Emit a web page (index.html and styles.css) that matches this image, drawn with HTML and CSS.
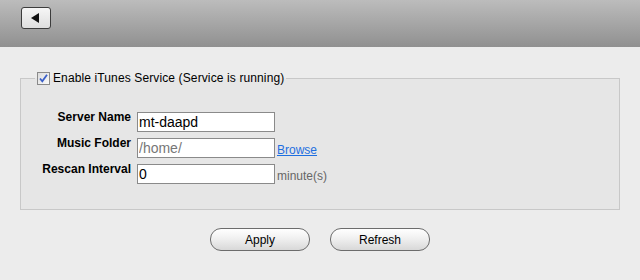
FILE: index.html
```html
<!DOCTYPE html>
<html lang="en">
<head>
  <meta charset="UTF-8">
  <title>iTunes Service</title>
  <link rel="stylesheet" href="styles.css">
</head>
<body>
  <div class="topbar">
    <button class="back-btn" type="button" aria-label="Back">
      <svg width="9" height="10" viewBox="0 0 9 10"><polygon points="0,5 8,0 8,10" fill="#111"/></svg>
    </button>
  </div>

  <div class="content">
    <fieldset class="service">
      <legend>
        <label class="enable">
          <span class="check">
            <svg width="11" height="11" viewBox="0 0 11 11"><path d="M2 5.5 L4.3 8.3 L9 1.8" fill="none" stroke="#3a5fc8" stroke-width="1.8"/></svg>
          </span>
          Enable iTunes Service (Service is running)
        </label>
      </legend>

      <div class="form-grid">
        <label class="field-label" for="serverName">Server Name</label>
        <div class="field"><input type="text" id="serverName" class="text-input" value="mt-daapd"></div>

        <label class="field-label" for="musicFolder">Music Folder</label>
        <div class="field"><input type="text" id="musicFolder" class="text-input muted" value="/home/"><a href="#" class="browse">Browse</a></div>

        <label class="field-label" for="rescan">Rescan Interval</label>
        <div class="field"><input type="text" id="rescan" class="text-input" value="0"><span class="unit">minute(s)</span></div>
      </div>
    </fieldset>

    <div class="actions">
      <button type="button" class="pill">Apply</button>
      <button type="button" class="pill">Refresh</button>
    </div>
  </div>
</body>
</html>
```

FILE: styles.css
```css
body {
  margin: 0;
  background-color: #ececec;
  font-family: 'Liberation Sans', Arial, sans-serif;
  font-size: 12px;
  color: #000;
}
.topbar {
  height: 47px;
  background: linear-gradient(to bottom, #bcbcbc, #909090);
  padding: 7px 0 0 21px;
  box-sizing: border-box;
}
.back-btn {
  width: 30px;
  height: 22px;
  padding: 0;
  border: 1px solid #3c3c3c;
  border-radius: 3px;
  background: linear-gradient(to bottom, #f6f6f6, #dedede);
  display: flex;
  align-items: center;
  justify-content: center;
}
.back-btn svg {
  display: block;
  margin-left: -2px;
}
.content {
  padding-top: 24px;
}
.service {
  margin: 0 20px;
  padding: 0 0 25px 0;
  border: 1px solid #c8c8c8;
  background-color: #e6e6e6;
  min-width: 0;
}
.service legend {
  margin-left: 14px;
  padding: 0 2px 0 2px;
  line-height: 15px;
  letter-spacing: 0.12px;
}
.enable {
  display: flex;
  align-items: center;
  gap: 3px;
}
.check {
  width: 11px;
  height: 11px;
  border: 1px solid #8a8a8a;
  background: linear-gradient(to bottom right, #dcdcdc, #fafafa);
  display: inline-flex;
  align-items: center;
  justify-content: center;
}
.check svg {
  display: block;
}
.form-grid {
  display: grid;
  grid-template-columns: 110px auto;
  column-gap: 6px;
  row-gap: 4px;
  margin-top: 24px;
}
.field-label {
  font-weight: bold;
  text-align: right;
  line-height: 14px;
  align-self: start;
}
.field {
  display: flex;
  align-items: center;
  gap: 2px;
  padding-top: 2px;
}
.text-input {
  width: 138px;
  height: 20px;
  box-sizing: border-box;
  border: 1px solid #8a8a8a;
  padding: 0 1px;
  margin: 0;
  font-family: 'Liberation Sans', Arial, sans-serif;
  font-size: 14px;
  color: #000;
  background-color: #fff;
  outline: none;
}
.text-input.muted {
  color: #777;
}
.browse {
  color: #1e6fe0;
  text-decoration: underline;
  padding-top: 3px;
}
.unit {
  color: #666;
  padding-top: 3px;
}
.actions {
  display: flex;
  justify-content: center;
  gap: 20px;
  margin-top: 18px;
}
.pill {
  width: 100px;
  height: 23px;
  border: 1px solid #6c6c6c;
  border-radius: 11px;
  background: linear-gradient(to bottom, #ffffff, #f0f0f0 45%, #d8d8d8);
  font-family: 'Liberation Sans', Arial, sans-serif;
  font-size: 12px;
  color: #000;
  padding: 0;
}
```
